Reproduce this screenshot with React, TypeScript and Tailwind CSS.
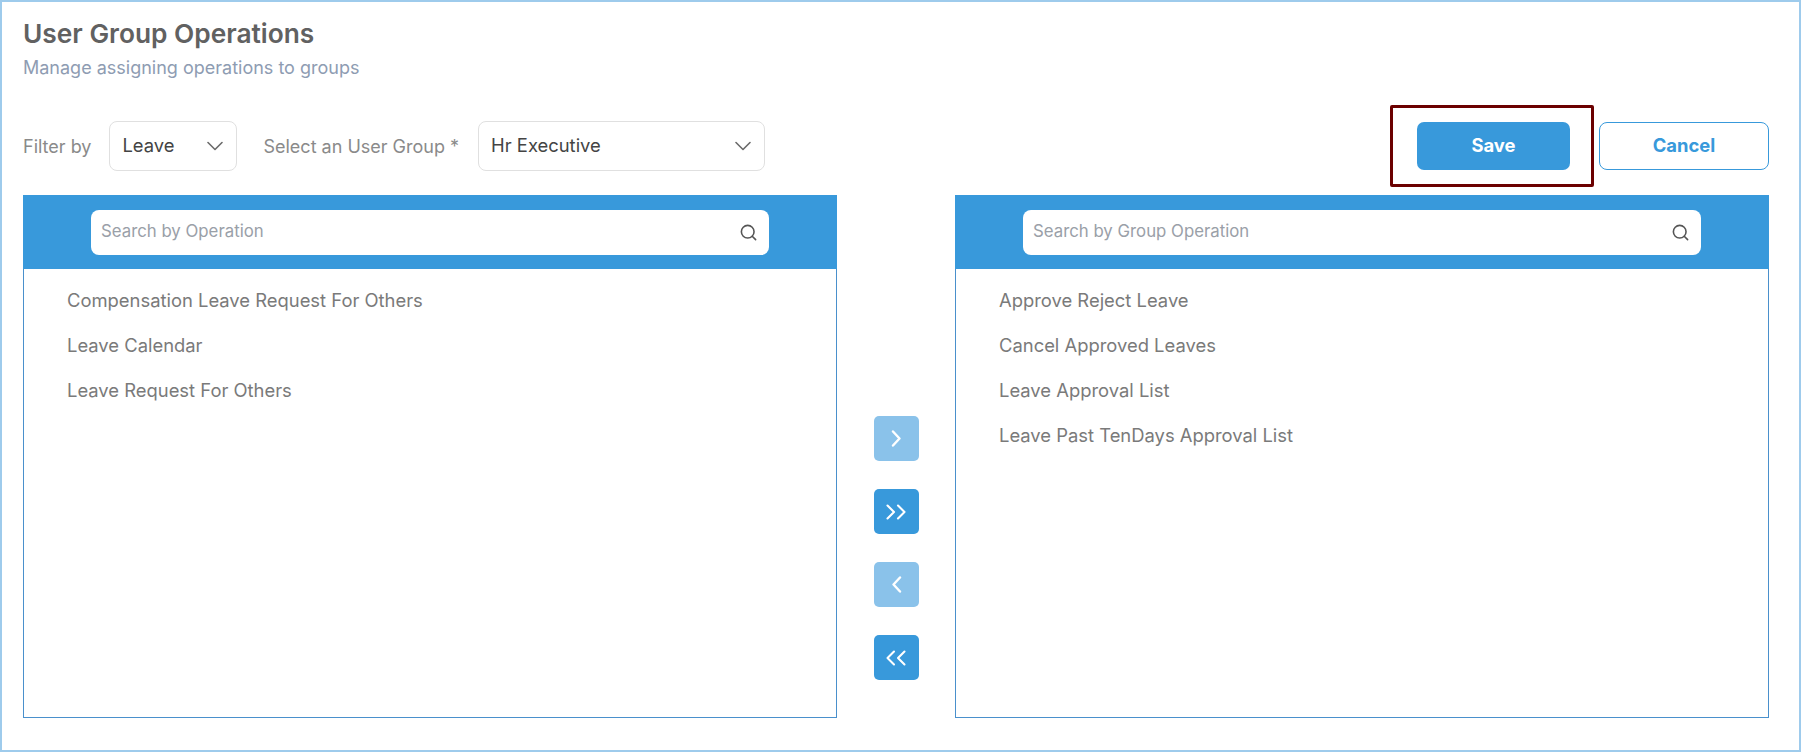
import React from "react";

function SearchIcon() {
  return (
    <svg width="19" height="19" viewBox="0 0 24 24" fill="none" stroke="#555" strokeWidth="2" strokeLinecap="round" strokeLinejoin="round">
      <circle cx="11" cy="11" r="8" />
      <path d="m21 21-4.3-4.3" />
    </svg>
  );
}

function ChevronDown() {
  return (
    <svg width="16" height="10" viewBox="0 0 16 10" fill="none" stroke="#6b6b6b" strokeWidth="1.6" strokeLinecap="round" strokeLinejoin="round">
      <path d="M1 1.5 L8 8.5 L15 1.5" />
    </svg>
  );
}

function Single({ left }: { left?: boolean }) {
  return (
    <svg width="11" height="17" viewBox="0 0 11 17" fill="none" stroke="white" strokeWidth="2.4" strokeLinecap="round" strokeLinejoin="round">
      <path d={left ? "M9 1.5 L2.5 8.5 L9 15.5" : "M2 1.5 L8.5 8.5 L2 15.5"} />
    </svg>
  );
}

function Double({ left }: { left?: boolean }) {
  return (
    <svg width="22" height="16" viewBox="0 0 22 16" fill="none" stroke="white" strokeWidth="2.1" strokeLinecap="round" strokeLinejoin="round">
      {left ? (
        <>
          <path d="M9 1.5 L2.5 8 L9 14.5" />
          <path d="M19.5 1.5 L13 8 L19.5 14.5" />
        </>
      ) : (
        <>
          <path d="M2.5 1.5 L9 8 L2.5 14.5" />
          <path d="M13 1.5 L19.5 8 L13 14.5" />
        </>
      )}
    </svg>
  );
}

function Panel({ placeholder, items }: { placeholder: string; items: string[] }) {
  return (
    <div className="w-[814px] h-[523px] flex flex-col">
      <div className="h-[74px] bg-[#3899db] flex items-center justify-center">
        <div className="w-[678px] h-[45px] bg-white rounded-[8px] flex items-center justify-between pl-[10px] pr-[11px]">
          <span className="text-[16.8px] text-[#9aa0a8]">{placeholder}</span>
          <SearchIcon />
        </div>
      </div>
      <div className="flex-1 border-x border-b border-[#4a90cc] pt-[9px] pl-[43px]">
        {items.map((t) => (
          <div key={t} className="h-[45px] flex items-center text-[18.4px] text-[#7a7a7a]">
            {t}
          </div>
        ))}
      </div>
    </div>
  );
}

export default function App() {
  return (
    <div className="w-[1803px] h-[754px] bg-white font-['Inter','Noto_Sans',sans-serif]">
      <div className="w-[1801px] h-[752px] border-2 border-[#9ecbec] pl-[21px] pt-[17px]">
        <div className="text-[26.3px] leading-[30px] font-semibold text-[#616161]">User Group Operations</div>
        <div className="mt-[7px] text-[18px] leading-[24px] text-[#8e9cb2]">Manage assigning operations to groups</div>

        <div className="mt-[41px] h-[50px] w-[1746px] flex items-center justify-between">
          <div className="flex items-center">
            <span className="text-[18px] text-[#8a8a8a] mr-[18px]">Filter by</span>
            <div className="w-[128px] h-[50px] border border-[#e0e0e0] rounded-[8px] flex items-center justify-between pl-[12px] pr-[13px]">
              <span className="text-[18.4px] text-[#444]">Leave</span>
              <ChevronDown />
            </div>
            <span className="text-[18px] text-[#8a8a8a] ml-[26px] mr-[19px]">Select an User Group *</span>
            <div className="w-[287px] h-[50px] border border-[#e0e0e0] rounded-[8px] flex items-center justify-between pl-[12px] pr-[13px]">
              <span className="text-[18.4px] text-[#444]">Hr Executive</span>
              <ChevronDown />
            </div>
          </div>
          <div className="flex items-center">
            <div className="relative">
              <button className="w-[153px] h-[48px] rounded-[7px] bg-[#3899db] text-white font-bold text-[18.4px]">Save</button>
              <div className="absolute left-[-27px] top-[-17px] w-[204px] h-[82px] border-[3px] border-[#6b0000] rounded-[2px] pointer-events-none" />
            </div>
            <button className="ml-[29px] w-[170px] h-[48px] rounded-[8px] border border-[#3899db] bg-white text-[#3899db] font-bold text-[18.4px]">Cancel</button>
          </div>
        </div>

        <div className="mt-[24px] flex">
          <Panel
            placeholder="Search by Operation"
            items={["Compensation Leave Request For Others", "Leave Calendar", "Leave Request For Others"]}
          />
          <div className="w-[118px] flex flex-col items-center pt-[221px] gap-[28px]">
            <button className="w-[45px] h-[45px] rounded-[5px] bg-[#8ac2ea] flex items-center justify-center"><Single /></button>
            <button className="w-[45px] h-[45px] rounded-[5px] bg-[#3899db] flex items-center justify-center"><Double /></button>
            <button className="w-[45px] h-[45px] rounded-[5px] bg-[#8ac2ea] flex items-center justify-center"><Single left /></button>
            <button className="w-[45px] h-[45px] rounded-[5px] bg-[#3899db] flex items-center justify-center"><Double left /></button>
          </div>
          <Panel
            placeholder="Search by Group Operation"
            items={["Approve Reject Leave", "Cancel Approved Leaves", "Leave Approval List", "Leave Past TenDays Approval List"]}
          />
        </div>
      </div>
    </div>
  );
}
